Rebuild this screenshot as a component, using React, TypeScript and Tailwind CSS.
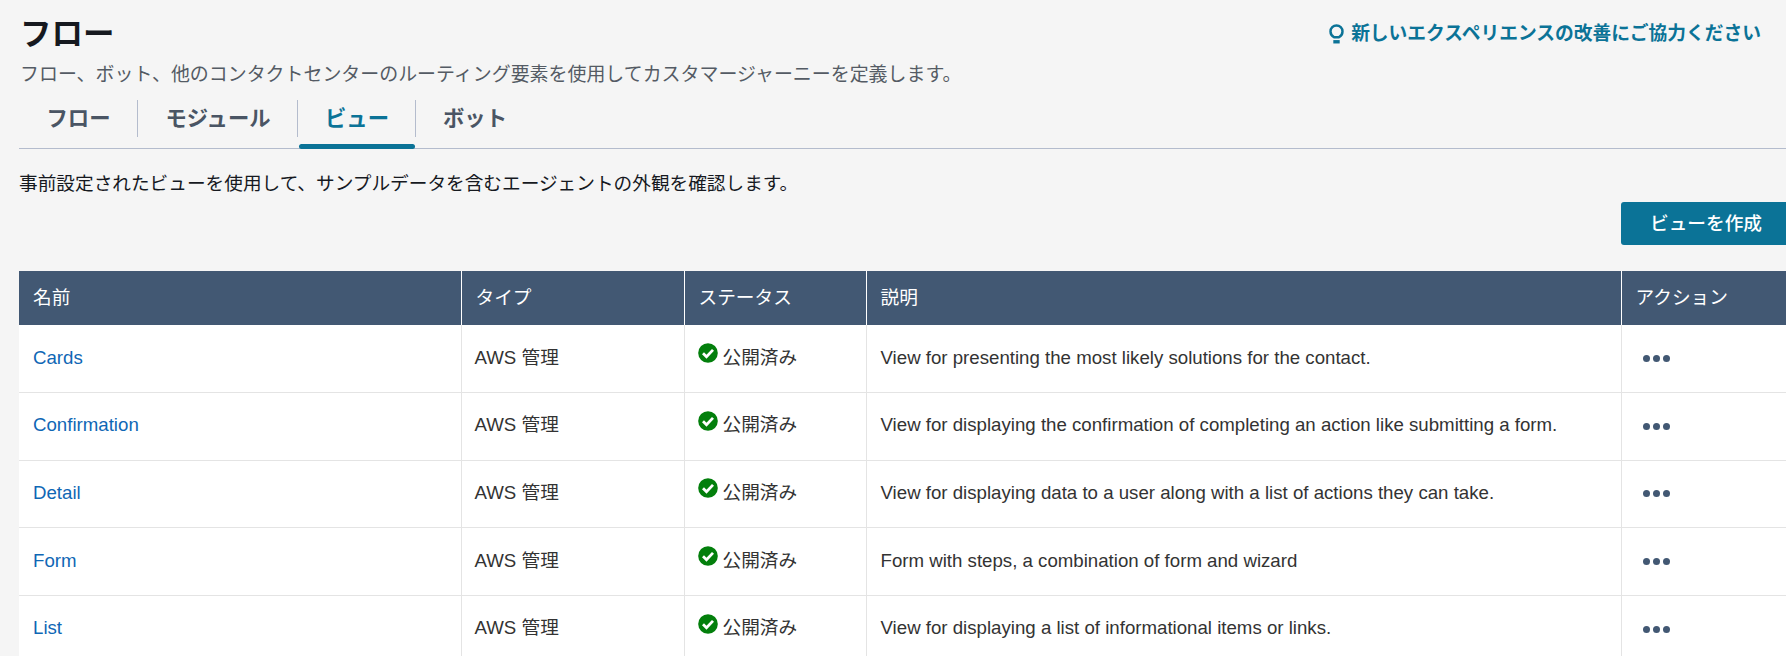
const ROWS = [
  { name: 'Cards', desc: 'View for presenting the most likely solutions for the contact.' },
  { name: 'Confirmation', desc: 'View for displaying the confirmation of completing an action like submitting a form.' },
  { name: 'Detail', desc: 'View for displaying data to a user along with a list of actions they can take.' },
  { name: 'Form', desc: 'Form with steps, a combination of form and wizard' },
  { name: 'List', desc: 'View for displaying a list of informational items or links.' },
];

const TABS = [
  { label: 'フロー', width: 'w-[119px]', active: false },
  { label: 'モジュール', width: 'w-[160px]', active: false },
  { label: 'ビュー', width: 'w-[118px]', active: true },
  { label: 'ボット', width: 'w-[118px]', active: false },
];

const BulbIcon = () => (
  <svg viewBox="0 0 16 21" className="w-[15px] h-[20px] shrink-0">
    <path d="M5.4 14C3.4 12.8 1.6 10.8 1.6 7.8a6.4 6.4 0 0 1 12.8 0c0 3-1.8 5-3.8 6.2z" fill="none" stroke="currentColor" strokeWidth="2.6" strokeLinejoin="round" />
    <rect x="4.6" y="17" width="6.8" height="3.6" fill="currentColor" />
  </svg>
);

const StatusIcon = () => (
  <svg viewBox="0 0 20 20" className="w-[20px] h-[20px] shrink-0 -mt-[9px] -ml-[1px] mr-[5px]">
    <circle cx="10" cy="10" r="9.8" fill="#037f0c" />
    <path d="M5 10.2l3.5 3.5 6.5-6.8" fill="none" stroke="#fff" strokeWidth="2.8" />
  </svg>
);

const MoreDots = () => (
  <div className="flex gap-[3px]">
    <span className="w-[7px] h-[7px] rounded-full bg-[#425873]" />
    <span className="w-[7px] h-[7px] rounded-full bg-[#425873]" />
    <span className="w-[7px] h-[7px] rounded-full bg-[#425873]" />
  </div>
);

const App = () => {
  return (
    <div className="w-[1786px] h-[656px] overflow-hidden bg-[#f5f5f5] text-[18.67px] text-[#333] font-['Liberation_Sans','Noto_Sans_CJK_JP',sans-serif]">
      <div className="flex justify-between pl-[20px] pr-[25px] pt-[14px]">
        <h1 className="text-[31.5px] leading-[40px] font-bold text-[#16191f]">フロー</h1>
        <a className="flex items-center gap-[7px] h-[40px] text-[18.75px] font-bold text-[#0b7397]">
          <BulbIcon />
          新しいエクスペリエンスの改善にご協力ください
        </a>
      </div>
      <p className="pl-[20px] mt-[7px] text-[18.95px] leading-[28px] text-[#545b64]">
        フロー、ボット、他のコンタクトセンターのルーティング要素を使用してカスタマージャーニーを定義します。
      </p>

      <div className="ml-[19px] mt-[11px] flex h-[49px] border-b border-[#b4bccd]">
        {TABS.map((t, i) => (
          <div key={t.label} className={`relative ${t.width} h-[48px] flex items-center justify-center pb-[9px]`}>
            <span className={`text-[21.33px] font-bold ${t.active ? 'text-[#0b7397]' : 'text-[#4a5564]'}`}>{t.label}</span>
            {i < TABS.length - 1 && <span className="absolute right-0 top-[0px] h-[37px] w-px bg-[#b4bccd]" />}
            {t.active && <span className="absolute left-[1px] right-[1px] bottom-[-1px] h-[5px] rounded-[3px] bg-[#0b7397]" />}
          </div>
        ))}
      </div>

      <p className="pl-[19px] mt-[21px] leading-[28px] text-[#16191f]">
        事前設定されたビューを使用して、サンプルデータを含むエージェントの外観を確認します。
      </p>

      <div className="flex justify-end mt-[4px]">
        <button className="w-[165px] h-[43px] pl-[29px] text-left rounded-l-[3px] bg-[#0b7397] text-white font-medium">
          ビューを作成
        </button>
      </div>

      <table className="ml-[19px] mt-[26px] w-[1767px] table-fixed border-collapse">
        <colgroup>
          <col className="w-[442px]" />
          <col className="w-[223px]" />
          <col className="w-[182px]" />
          <col className="w-[755px]" />
          <col className="w-[165px]" />
        </colgroup>
        <thead>
          <tr className="h-[54px] bg-[#425873] text-white text-left">
            {['名前', 'タイプ', 'ステータス', '説明', 'アクション'].map((h, i) => (
              <th key={h} className={`font-normal pl-[14px] ${i > 0 ? 'border-l border-white' : ''}`}>{h}</th>
            ))}
          </tr>
        </thead>
        <tbody className="bg-white">
          {ROWS.map((r) => (
            <tr key={r.name} className="h-[67.6px] border-b border-[#e4e4e4]">
              <td className="pl-[14px] pb-[2px] text-[#0f67b5]">{r.name}</td>
              <td className="pl-[13px] pb-[2px] border-l border-[#e4e4e4]">AWS 管理</td>
              <td className="pl-[14px] pb-[2px] border-l border-[#e4e4e4]">
                <div className="flex items-center"><StatusIcon />公開済み</div>
              </td>
              <td className="pl-[14px] pb-[2px] border-l border-[#e4e4e4]">{r.desc}</td>
              <td className="pl-[21px] border-l border-[#e4e4e4]"><MoreDots /></td>
            </tr>
          ))}
        </tbody>
      </table>
    </div>
  );
};

export default App;
